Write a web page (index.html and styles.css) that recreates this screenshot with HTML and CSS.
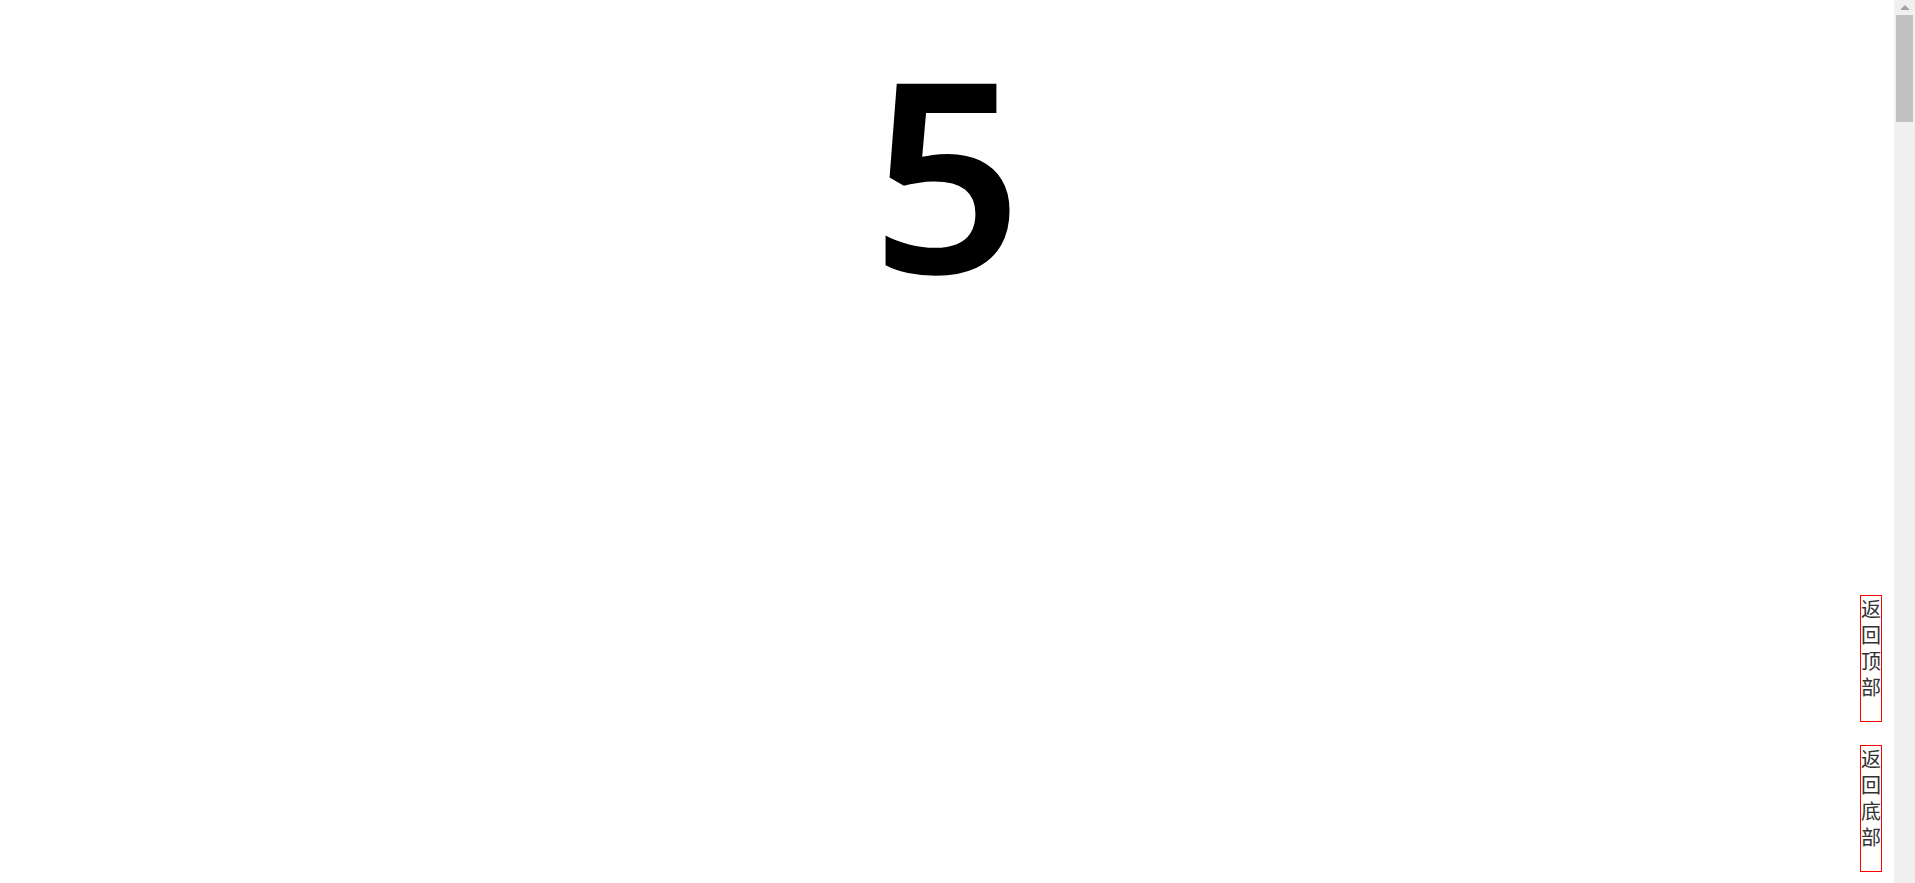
FILE: index.html
```html
<!DOCTYPE html>
<html lang="zh-CN">
<head>
<meta charset="utf-8">
<title>返回顶部</title>
<link rel="stylesheet" href="styles.css">
</head>
<body>
<div class="app">
  <div class="viewport">
    <main class="pages">
      <section class="page"><h1 class="num">5</h1></section>
    </main>
    <nav class="jump">
      <a class="jump-btn" href="#">返回顶部</a>
      <a class="jump-btn" href="#">返回底部</a>
    </nav>
  </div>
  <div class="scrollbar" aria-hidden="true">
    <div class="sb-arrow"></div>
    <div class="sb-thumb"></div>
  </div>
</div>
</body>
</html>
```
FILE: styles.css
```css
html, body {
  height: 100%;
  margin: 0;
  overflow: hidden;
  background: #fff;
}
body {
  font-family: "Open Sans", "Noto Sans CJK SC", sans-serif;
  color: #000;
}
.app {
  display: flex;
  height: 100%;
}
.viewport {
  position: relative;
  flex: 1;
  overflow: hidden;
}
.pages {
  display: flex;
  flex-direction: column;
}
.page {
  height: 883px;
  text-align: center;
}
.num {
  margin: 0;
  padding-top: 21px;
  font-family: "Noto Sans", "Open Sans", sans-serif;
  font-size: 265px;
  line-height: 300px;
  font-weight: 600;
}
.jump {
  position: absolute;
  right: 12px;
  bottom: 11px;
  display: flex;
  flex-direction: column;
  gap: 23px;
}
.jump-btn {
  display: block;
  width: 20px;
  height: 125px;
  border: 1px solid #f00;
  font-family: "Noto Sans CJK SC", sans-serif;
  font-size: 20px;
  line-height: 26px;
  color: #333;
  text-decoration: none;
  word-break: break-all;
  overflow: hidden;
}
.scrollbar {
  width: 21px;
  flex: none;
  background: #f0f0f0;
  display: flex;
  flex-direction: column;
  align-items: center;
}
.sb-arrow {
  width: 0;
  height: 0;
  margin-top: 5px;
  border-left: 5px solid transparent;
  border-right: 5px solid transparent;
  border-bottom: 5px solid #a3a3a3;
}
.sb-thumb {
  width: 17px;
  height: 107px;
  margin-top: 5px;
  background: #c1c1c1;
}
```
